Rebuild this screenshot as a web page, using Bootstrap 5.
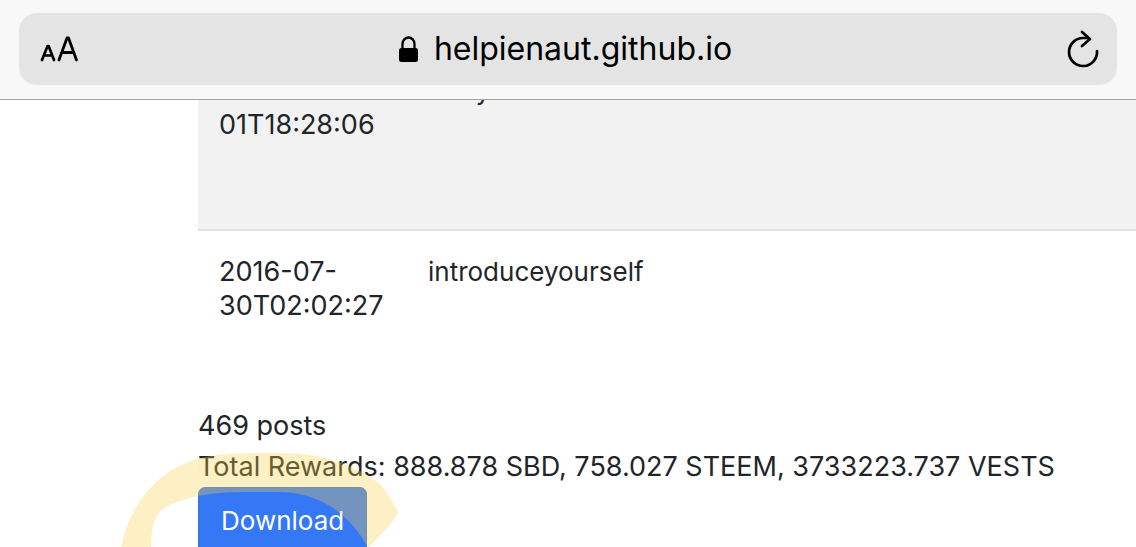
<!DOCTYPE html>
<html lang="en">
<head>
<meta charset="utf-8">
<meta name="viewport" content="width=device-width, initial-scale=1">
<title>helpienaut.github.io</title>
<link href="https://cdn.jsdelivr.net/npm/bootstrap@5.3.0/dist/css/bootstrap.min.css" rel="stylesheet">
<style>
  body { font-family: Inter, "Liberation Sans", sans-serif; font-size: 27px; line-height: 41px; color: #212529; overflow: hidden; }
  .browser-bar { padding: 13px 19px 14px; background: #f8f8f9; border-bottom: 1px solid #a2a5a5; }
  .address { height: 72px; padding: 0 17px 0 20px; background: #e4e4e5; border-radius: 18px; color: #000; }
  .address button { color: #000; line-height: 40px; }
  .site { padding-right: 14px; }
  .host { font-size: 32px; line-height: 44px; }
  .page-body { margin-top: -50px; padding-left: 198px; }
  .posts { --bs-table-striped-bg: #f2f2f2; color: inherit; line-height: 34px; table-layout: fixed; }
  .posts td { padding: 24px 21px; border-bottom: 0; height: 175px; color: #212529; }
  .posts td + td { font-size: 26px; }
  .posts tr:first-child td { height: 180px; border-bottom: 2px solid #e1e2e3; }
  .date-col { width: 209px; }
  .btn-download { --bs-btn-bg: #3478f6; --bs-btn-border-color: #3b74c9; --bs-btn-border-radius: 7px; font-size: 26px; line-height: 41px; padding: 12px 22px; }
  /* marker stroke drawn over the button */
  .marker { position: absolute; left: -80px; top: -37px; pointer-events: none; }
</style>
</head>
<body>
<header class="browser-bar sticky-top">
  <div class="address d-flex align-items-center justify-content-between">
    <button type="button" class="btn p-0 border-0" aria-label="Text size">
      <svg width="40" height="28" viewBox="0 0 40 28" fill="none" stroke="currentColor" stroke-linecap="round" stroke-linejoin="round" class="d-block"><path stroke-width="2.700" d="M3 25 8.600 11h1L15 25M5.200 20.500h7.800"/><path stroke-width="2.800" d="M20 25 28 3h1.500L37.500 25M23 17.500h11.500"/></svg>
    </button>
    <div class="site d-flex align-items-center gap-3">
      <svg width="19" height="27" viewBox="0 0 19 27" aria-hidden="true"><rect y="12" width="19" height="14" rx="2.500"/><path d="M3.500 13V8a6 6.500 0 0 1 12 0v5" fill="none" stroke="#000" stroke-width="2.300"/></svg>
      <span class="host">helpienaut.github.io</span>
    </div>
    <button type="button" class="btn p-0 border-0" aria-label="Reload">
      <svg width="34" height="40" viewBox="0 0 34 40" fill="none" stroke="currentColor" stroke-width="2.700" stroke-linecap="round" stroke-linejoin="round" class="d-block"><path d="M31 22A14 14 0 1 1 17 9h6M16 3l8 7-8 7"/></svg>
    </button>
  </div>
</header>
<main class="page-body">
  <table class="table table-striped posts mb-0">
    <colgroup><col class="date-col"><col></colgroup>
    <tbody>
      <tr><td>2016-08-<br>01T18:28:06</td><td>story</td></tr>
      <tr><td>2016-07-<br>30T02:02:27</td><td>introduceyourself</td></tr>
    </tbody>
  </table>
  <div>469 posts</div>
  <div class="text-nowrap">Total Rewards: 888.878 SBD, 758.027 STEEM, 3733223.737 VESTS</div>
  <div class="position-relative">
    <button type="button" class="btn btn-primary btn-download">Download</button>
    <svg class="marker" width="284" height="104" viewBox="0 0 284 104" aria-hidden="true"><path fill="#f9d046" fill-opacity=".32" d="M2 104C6 72 26 30 68 13 94 2 125 3 164 3c46 0 78 15 98 31 9 10 14 20 18 29q-3 6-9 13L250 98C232 63 200 43 164 42H125C96 42 70 46 50 56 32 66 34 82 33 104Z"/></svg>
  </div>
</main>
<script src="https://cdn.jsdelivr.net/npm/bootstrap@5.3.0/dist/js/bootstrap.bundle.min.js"></script>
</body>
</html>
